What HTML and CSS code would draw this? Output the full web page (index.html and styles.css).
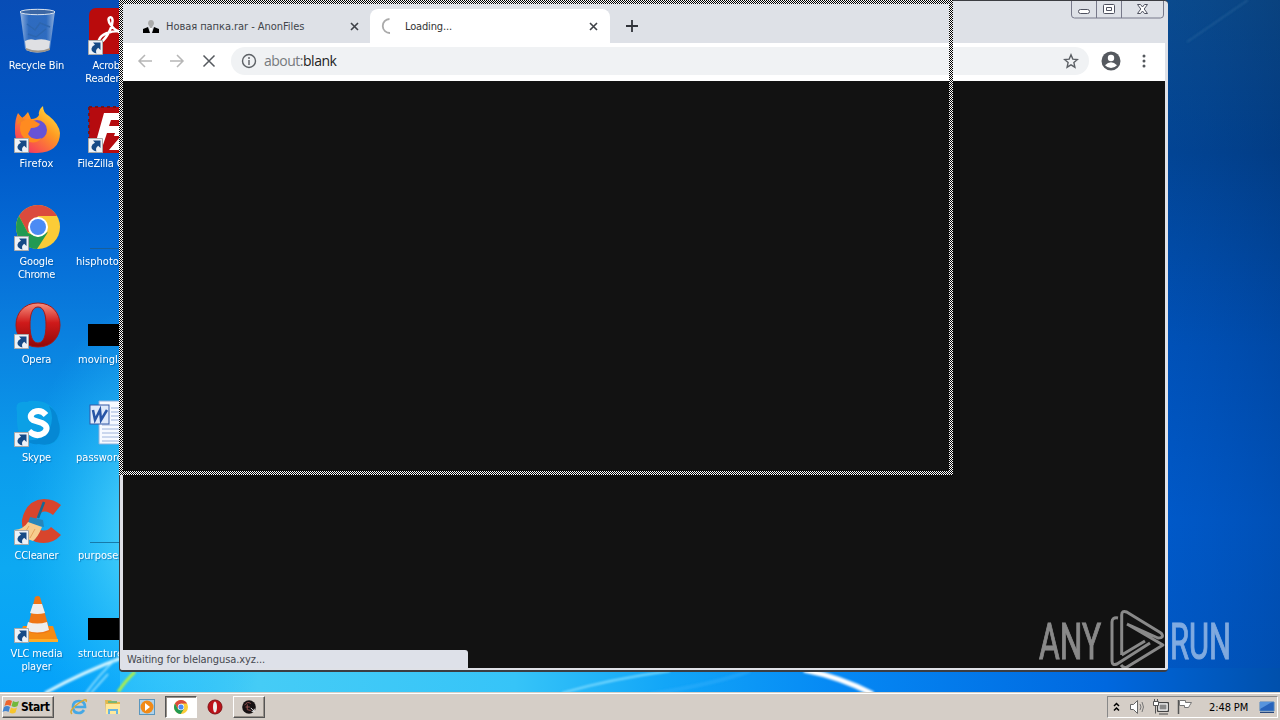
FILE: index.html
```html
<!DOCTYPE html>
<html lang="en">
<head>
<meta charset="utf-8">
<title>Desktop</title>
<link rel="stylesheet" href="styles.css">
</head>
<body>
<main class="desktop">
<svg class="wallpaper" viewBox="0 0 1280 693" preserveAspectRatio="none">
  <defs>
    <linearGradient id="leftSky" x1="0" y1="0" x2="0" y2="1"><stop offset="0" stop-color="#084db6"/><stop offset=".2" stop-color="#0057c6"/><stop offset=".35" stop-color="#056bd6"/><stop offset=".48" stop-color="#0a80df"/><stop offset=".66" stop-color="#0b9cec"/><stop offset=".82" stop-color="#0da9f2"/><stop offset="1" stop-color="#05a2fa"/></linearGradient>
    <linearGradient id="rightSky" x1="0" y1="0" x2="0" y2="1"><stop offset="0" stop-color="#0c467f"/><stop offset=".22" stop-color="#023f87"/><stop offset=".5" stop-color="#004eb0"/><stop offset=".75" stop-color="#0057c4"/><stop offset="1" stop-color="#0055bd"/></linearGradient>
    <linearGradient id="lowSky"><stop offset="0" stop-color="#23b9fa"/><stop offset=".12" stop-color="#45ccf6"/><stop offset=".34" stop-color="#36c4f8"/><stop offset=".47" stop-color="#12a6f8"/><stop offset=".62" stop-color="#0588f4"/><stop offset=".85" stop-color="#0068df"/><stop offset="1" stop-color="#0050ac"/></linearGradient>
    <radialGradient id="glow"><stop offset="0" stop-color="#6ee8ff" stop-opacity=".85"/><stop offset="1" stop-color="#20bfff" stop-opacity="0"/></radialGradient>
    <linearGradient id="rightShade"><stop offset="0" stop-color="#0062e0" stop-opacity=".15"/><stop offset="1" stop-color="#00327c" stop-opacity=".2"/></linearGradient>
    <filter id="soft"><feGaussianBlur stdDeviation="1"/></filter>
  </defs>
  <rect width="640" height="693" fill="url(#leftSky)"/>
  <rect x="640" width="640" height="693" fill="url(#rightSky)"/>
  <rect x="1168" width="112" height="693" fill="url(#rightShade)"/>
  <rect x="120" y="668" width="1160" height="25" fill="url(#lowSky)"/>
  <ellipse cx="155" cy="530" rx="135" ry="230" fill="url(#glow)"/>
  <g filter="url(#soft)" fill="none">
    <path d="M45 693Q83 672 124 657" stroke="#d9f7ff" stroke-width="3"/>
    <path d="M86 693Q99 675 115 660M91 693l17-19" stroke="#a6e9ff" stroke-width="1.5"/>
    <path d="M118 692q8-12 17-20" stroke="#b9f43b" stroke-width="3"/>
    <path d="M562 693Q610 679 670 671" stroke="#79d9ff" stroke-width="2"/>
    <path d="M650 694q65-10 100-23" stroke="#41b8ff" stroke-width="4" opacity=".35"/>
    <path d="M804 670Q840 677 873 694" stroke="#fff" stroke-width="5"/>
    <path d="M1187 42L1248 0" stroke="#3e78aa" stroke-width="1.5" opacity=".5"/>
  </g>
</svg>

<svg class="defs" aria-hidden="true">
  <symbol id="shortcut" viewBox="0 0 15 15"><path fill="#eef2f7" stroke="#aaa" d="M.5.5h14v14H.5z"/><path fill="#164a86" d="M5 2.500h7.500V10l-2.300-2.300Q7 10 8.500 13.500 3 12 3.500 8.500 4 6 7 4.800z"/></symbol>
  <symbol id="chrome" viewBox="0 0 44 44"><circle cx="22" cy="22" r="22" fill="#fbcc37"/><path d="M3 11A22 22 0 0 1 41 11H22L12 28z" fill="#db4b3d"/><path d="M3 11A22 22 0 0 0 21 44L32 27 22 32 12 28z" fill="#229a53"/><circle cx="22" cy="22" r="10" fill="#fff"/><circle cx="22" cy="22" r="8" fill="#4b8bf4"/></symbol>
  <symbol id="opera" viewBox="0 0 46 46"><defs><linearGradient id="og" x2="0" y2="1"><stop stop-color="#f7917f"/><stop offset=".45" stop-color="#cf1a1a"/><stop offset="1" stop-color="#8f0808"/></linearGradient></defs><path fill="url(#og)" stroke="#a51917" fill-rule="evenodd" d="M23 1C37 1 45 11 45 23S37 45 23 45 1 35 1 23 9 1 23 1zM23 5C17 5 15 13 15 23s2 18 8 18 8-8 8-18S29 5 23 5z"/></symbol>
</svg>

<section class="icons">
  <div class="item"><svg class="pic" viewBox="0 0 48 48"><defs><linearGradient id="bin"><stop stop-color="#cddcf0" stop-opacity=".75"/><stop offset=".25" stop-color="#4a7fc4" stop-opacity=".6"/><stop offset=".75" stop-color="#4a7fc4" stop-opacity=".6"/><stop offset="1" stop-color="#c4d5eb" stop-opacity=".75"/></linearGradient></defs><path d="M7 3h35l-5 38q-12 5-25 0z" fill="url(#bin)"/><path d="M12 33q5-3 10-1 8-2 15 1l-1 9q-12 5-23 0z" fill="#dfe0e3"/><path d="M13 40q12 5 24 0v2q-12 5-24 0z" fill="#9b948b"/><path d="M14 16l8 6 5-7 10 4M15 26l8 3 10-8" stroke="#2d66af" stroke-width="1.500" fill="none"/><ellipse cx="24.500" cy="4" rx="17.500" ry="2.700" fill="#3c67a4" stroke="#dce5ef"/></svg><p>Recycle Bin</p></div>
  <div class="item"><svg class="pic" viewBox="0 0 48 48"><rect x="2" width="45" height="46" rx="7" fill="#b90b0c"/><path d="M12 32c2-6 11-9 21-9 9 0 7 5 1 2-9-4-14-12-12-15 4-3 5 4 1 12-4 9-10 15-11 10z" fill="none" stroke="#fff" stroke-width="2.500"/><use href="#shortcut" x="1" y="32" width="15" height="15"/></svg><p>Acrobat<br>Reader DC</p></div>
  <div class="item"><svg class="pic" viewBox="0 0 48 48"><defs><linearGradient id="ff" x1="1" x2=".2" y2="1"><stop stop-color="#fff14a"/><stop offset=".45" stop-color="#ff9a22"/><stop offset="1" stop-color="#f52f65"/></linearGradient></defs><path d="M2 22Q2 13 5 7l4 5q3-2 6-6l3 7q6 0 8-4-1-5 4-9 0 7 6 10 10 8 11 17 0 19-23 20T2 22z" fill="url(#ff)"/><circle cx="24" cy="24" r="10" fill="#6653d6"/><path d="M8 16q7-5 12-2l7 4q-2 4-9 4l-3 6q4 7 14 4-9 9-18 0-6-6-3-16z" fill="#ff8b20"/><path d="M4 19l2-10 6 5q-5 2-8 5z" fill="#f38424"/><use href="#shortcut" x="1" y="32" width="15" height="15"/></svg><p class="loose">Firefox</p></div>
  <div class="item"><svg class="pic" viewBox="0 0 48 48"><rect x="2" y="1" width="48" height="46" fill="#b50b0f"/><path d="M2 1h48M2 1v46" stroke="#75131c" stroke-width="2" stroke-dasharray="3 3"/><path d="M17 7h26l-2 7H24l-2 6h14l-2 7H20l-4 12H8z" fill="#fff"/><path d="M29 24h18L35 38h13v6H22l12-14h-7z" fill="#fff"/><use href="#shortcut" x="1" y="32" width="15" height="15"/></svg><p>FileZilla Client</p></div>
  <div class="item"><svg class="pic" viewBox="0 0 48 48"><use href="#chrome" x="3" y="1" width="44" height="44"/><use href="#shortcut" x="1" y="32" width="15" height="15"/></svg><p>Google<br><span class="wide">Chrome</span></p></div>
  <div class="item"><svg class="pic" viewBox="0 0 48 48"><path d="M3 44.500h46" stroke="#185f9b"/></svg><p class="file">hisphotoes.jpg</p></div>
  <div class="item"><svg class="pic" viewBox="0 0 48 48"><use href="#opera" x="2" width="46" height="46"/><use href="#shortcut" x="1" y="32" width="15" height="15"/></svg><p>Opera</p></div>
  <div class="item"><svg class="pic" viewBox="0 0 48 48"><path d="M1 22h48v22H1z"/></svg><p class="file shift">movinglands</p></div>
  <div class="item"><svg class="pic" viewBox="0 0 48 48"><path d="M4 12Q1 0 14 2q3-2 10-1 17 1 21 19 5 11-1 20-7 7-15 4Q5 46 4 22z" fill="#0ba0e6"/><path d="M36 6q8 5 9 14 5 14-4 22-6 4-15 2-8 1-14-4 17 2 24-10 6-12 0-24z" fill="#0588d4"/><path d="M33 15q-5-6-12-3-6 4-1 8l9 3q8 4 2 10-8 5-15-2" fill="none" stroke="#fff" stroke-width="6"/><use href="#shortcut" x="1" y="32" width="15" height="15"/></svg><p>Skype</p></div>
  <div class="item"><svg class="pic" viewBox="0 0 48 48"><path d="M12 1h36v43H12z" fill="#f6f9ff" stroke="#8ab0dd"/><path d="M24 8h20M24 12h20M24 16h20M24 20h20M15 25h29M15 29h29M15 33h29M15 37h29M15 41h29" stroke="#9eb4dc"/><rect x="3" y="5" width="19" height="19" fill="#dfe9fa" stroke="#3259a6"/><path d="M6 10l2 10 5-10 1 10 6-10" fill="none" stroke="#2754a6" stroke-width="2.500"/></svg><p class="file">passwordsx.rtf</p></div>
  <div class="item"><svg class="pic" viewBox="0 0 48 48"><path d="M48 7L40 17q-10-8-16 2-3 9 4 13 6 2 10-3l10 8q-10 11-25 7Q8 38 9 22 13 2 31 1q10 0 17 6z" fill="#d8452c"/><path d="M31 4L25 20" stroke="#176892" stroke-width="2.500"/><path d="M17 19l13 3 1 7-16-4z" fill="#2686bb"/><path d="M15 24l14 5q-4 10-9 14Q9 40 1 32q10-1 14-8z" fill="#f7cc8d"/><path d="M16 28l-5 8m11-5l-5 9" stroke="#e7a25b"/><use href="#shortcut" x="1" y="32" width="15" height="15"/></svg><p>CCleaner</p></div>
  <div class="item"><svg class="pic" viewBox="0 0 48 48"><path d="M3 44.500h46" stroke="#177aa9"/></svg><p class="file shift">purposesite</p></div>
  <div class="item"><svg class="pic" viewBox="0 0 48 48"><path d="M10 30h30l5 15H4z" fill="#f58b15"/><path d="M4 43h41v3H4z" fill="#ffac28"/><path d="M22 1q3-2 5 0l10 34q-12 6-23 0z" fill="#ef7615"/><path d="M20 8h9l3 9q-8 2-15 0zM15 26q9 3 19 0l2 8q-12 5-23 0z" fill="#eee"/><use href="#shortcut" x="1" y="32" width="15" height="15"/></svg><p>VLC media<br>player</p></div>
  <div class="item"><svg class="pic" viewBox="0 0 48 48"><path d="M1 22h48v22H1z"/></svg><p class="file shift">structurede</p></div>
</section>

<section class="window">
  <header class="tabs">
    <div class="tab first">
      <svg class="fav" viewBox="0 0 16 14"><path d="M0 13V9l5-2 2 6zM9 13l2-6 5 2v4z"/><path d="M5 4q0-4 3-4t3 4l-3 5z" fill="#aaa"/><path d="M7 8l1 5 1-5z" fill="#fff"/></svg>
      <span class="title">Новая папка.rar - AnonFiles</span>
      <svg class="close" viewBox="0 0 9 9"><path d="M1 1l7 7m0-7L1 8"/></svg>
    </div>
    <div class="tab active">
      <svg class="spin" viewBox="0 0 16 16"><path d="M9.500 1A7 7 0 1 0 10 15"/></svg>
      <span class="title load">Loading...</span>
      <svg class="close" viewBox="0 0 9 9"><path d="M1 1l7 7m0-7L1 8"/></svg>
    </div>
    <svg class="plus" viewBox="0 0 12 12"><path d="M6 0v12M0 6h12"/></svg>
    <svg class="controls" viewBox="0 0 93 18"><path d="M.5 0v14q0 3 3 3h86q3 0 3-3V0M25.500 0v17M50.500 0v17" fill="none" stroke="#77798a"/><rect x="7.500" y="8.500" width="11" height="4" rx="2" fill="#fff" stroke="#4f5260"/><rect x="32.500" y="3.500" width="11" height="9" rx="1" fill="#fff" stroke="#4f5260"/><path fill="#fff" stroke="#4f5260" d="M35.500 6.500h5v3h-5zM66.500 3.500h3l2 2.500 2-2.500h3L73.200 8l3.300 4.500h-3l-2-2.500-2 2.500h-3L69.800 8z"/></svg>
  </header>
  <div class="toolbar">
    <svg class="nav pale" viewBox="0 0 16 16"><path d="M15 8H2m6-6L2 8l6 6"/></svg>
    <svg class="nav pale" viewBox="0 0 16 16"><path d="M1 8h13M8 2l6 6-6 6"/></svg>
    <svg class="nav" viewBox="0 0 16 16"><path d="M2.500 2.500l11 11m0-11l-11 11"/></svg>
    <div class="address">
      <svg class="info" viewBox="0 0 16 16"><circle cx="8" cy="8" r="6.500"/><path d="M8 7v5M8 4v2"/></svg>
      <span class="url"><i>about:</i>blank</span>
      <svg class="star" viewBox="0 0 16 16"><path d="M8 1.800l1.800 4.300 4.600.4-3.500 3.100 1 4.600L8 11.800l-3.900 2.400 1-4.600-3.500-3.100 4.600-.4z"/></svg>
    </div>
    <svg class="user" viewBox="0 0 20 20"><circle cx="10" cy="10" r="9.500" fill="#55595f"/><circle cx="10" cy="7" r="3.200" fill="#fff"/><path d="M4 14.200q3-3 6-3t6 3Q13.500 17 10 17t-6-2.800z" fill="#fff"/></svg>
    <svg class="more" viewBox="0 0 4 14"><circle cx="2" cy="2" r="1.500"/><circle cx="2" cy="7" r="1.500"/><circle cx="2" cy="12" r="1.500"/></svg>
  </div>
  <div class="page"><div class="status"><span>Waiting for blelangusa.xyz...</span></div></div>
</section>

<svg class="drag" viewBox="0 0 834 475"><defs><pattern id="check" width="2" height="2" patternUnits="userSpaceOnUse"><path fill="#000" d="M0 0h2v2H0z"/><path fill="#fff" d="M0 0h1v1H0zM1 1h1v1H1z"/></pattern></defs><path fill="url(#check)" fill-rule="evenodd" shape-rendering="crispEdges" d="M0 0h834v475H0zM4 4v467h826V4z"/></svg>

<svg class="brand" viewBox="0 0 200 64">
  <g class="brandtext"><text x="3" y="50" textLength="62" lengthAdjust="spacingAndGlyphs">ANY</text><text x="134" y="50" textLength="61" lengthAdjust="spacingAndGlyphs">RUN</text></g>
  <path d="M82 9q-6-1-6 4v39q0 5 5 3L114 34M85.700 46V6q0-5 5-3L125 24q4 5-3 5L91 15M91 15L127 36 91 58q-3 2-6-2M85.700 46L109 32" fill="none" stroke="#fff" stroke-width="3" stroke-linejoin="round"/>
</svg>
</main>

<footer class="taskbar">
  <button class="start"><svg viewBox="0 0 16 16"><path d="M2 2q3-2 6 0L6.500 7q-3-2-6 0z" fill="#ed642e"/><path d="M9 2q3 2 6 0l-1.500 5q-3 2-6 0z" fill="#72b83b"/><path d="M0 8q3-2 6 0l-1.500 5q-3-2-6 0z" fill="#4284d0"/><path d="M7 8.500q3 2 6 0l-1.500 5q-3 2-6 0z" fill="#f7c52c"/></svg><span>Start</span></button>
  <svg class="quick" viewBox="0 0 18 18"><path d="M14 12q-2 3-5 3-6 0-6-6t6-6q6 0 6 6H5" fill="none" stroke="#45a8e5" stroke-width="2.700"/><path d="M2 16Q-2 13 9 5q9-6 7-1" fill="none" stroke="#d9a933" stroke-width="1.500"/></svg>
  <svg class="quick" viewBox="0 0 18 18"><path d="M1 2h6l2 2h7v11H2z" fill="#e1b94d"/><path d="M2 6h14v10H2z" fill="#ffe99b"/><path d="M4 16v-5h10v5h-2v-3H6v3z" fill="#69b5df"/><path d="M4 4h9" stroke="#79b675" stroke-width="2"/></svg>
  <svg class="quick" viewBox="0 0 18 18"><rect x="1.500" y="1.500" width="15" height="15" fill="#afd2ec" stroke="#5a96bd"/><circle cx="9" cy="9" r="6.500" fill="#f18a17"/><path d="M7 5l5 4-5 4z" fill="#fff"/></svg>
  <div class="task pressed"><svg viewBox="0 0 44 44"><use href="#chrome"/></svg></div>
  <svg class="quick operaicon" viewBox="0 0 18 18"><circle cx="9" cy="9" r="7" fill="#bd1119" stroke="#7f1115"/><ellipse cx="9" cy="9" rx="2" ry="5.500" fill="#eee"/></svg>
  <div class="task"><svg viewBox="0 0 16 16"><circle cx="8" cy="8" r="7.800" fill="#161113"/><path d="M3 6q3-5 7-2M4 8h5M6 5v6l4 1" stroke="#a65b59" fill="none"/><path d="M10 9l4 4m0-3v3h-3" stroke="#fff" fill="none"/></svg></div>
  <div class="tray">
    <svg class="chev" viewBox="0 0 7 10"><path d="M1 4l2.500-2.500L6 4M1 8.500L3.500 6 6 8.500"/></svg>
    <svg class="tr" viewBox="0 0 18 16"><path d="M1.500 5.500h3l4-4v13l-4-4h-3z" fill="#fff" stroke="#666"/><path d="M11 5q2 3 0 6M13 3q3 5 0 10" fill="none" stroke="#777"/></svg>
    <svg class="tr" viewBox="0 0 18 16"><path d="M4.500 3.500h11v9h-11zM6 15h9" fill="#aaa" stroke="#444"/><path d="M6 5h8v6H6z" fill="#888" stroke="#fff"/><path d="M.5 2.500h5v4h-5zM2.500 6.500v8M1.500 0v2M4.500 0v2" fill="#fff" stroke="#555"/></svg>
    <svg class="tr" viewBox="0 0 18 16"><path d="M1.500 1v14" stroke="#555" stroke-width="1.500"/><path d="M2.500 1.500h6v2h6q-2 3-3 5h-4v-2h-5z" fill="#fff" stroke="#777"/></svg>
    <time>2:48 PM</time>
    <svg class="show" viewBox="0 0 16 13"><path d="M1 1h14v9H1z" fill="#2763bc" stroke="#4c82bd"/><path d="M1 1h12L1 8z" fill="#5794dd"/><path d="M1 11h14v1H1z" fill="#26467c"/></svg>
  </div>
</footer>
</body>
</html>
```
FILE: styles.css
```css
* { box-sizing: border-box; }
body { margin: 0; width: 1280px; height: 720px; overflow: hidden; display: flex; flex-direction: column; font: 11px/13px "DejaVu Sans Condensed", "DejaVu Sans", sans-serif; font-stretch: condensed; }
.desktop { position: relative; height: 692px; overflow: hidden; flex: none; }
.wallpaper { position: absolute; width: 1280px; height: 693px; }
.defs { position: absolute; width: 0; height: 0; }
svg { display: block; flex: none; }
.icons { position: relative; width: 119px; overflow: hidden; padding-top: 8px; display: grid; grid-template-columns: 73px 76px; grid-auto-rows: 98px; }
.item { display: flex; flex-direction: column; align-items: center; color: #fff; text-align: center; text-shadow: 1px 1px 1px #004b8b80; }
.item p { margin: 3px 0 0; white-space: nowrap; letter-spacing: -.15px; }
.item p.loose { letter-spacing: .2px; }
.item .wide { letter-spacing: -.3px; }
.item p.file { align-self: flex-start; margin-left: 3px; letter-spacing: .02px; }
.item p.shift { margin-left: 5px; }
.pic { width: 48px; height: 48px; }
.window { position: absolute; left: 119px; top: 0; width: 1049px; height: 672px; border: solid #3c3d42; border-width: 1px 0 2px 1px; border-radius: 4px; padding: 0 3px 2px 3px; background: #dfe1e7; display: flex; flex-direction: column; }
.tabs { height: 42px; display: flex; padding-top: 8px; background: #dee1e7; position: relative; flex: none; }
.tab { height: 34px; display: flex; align-items: center; color: #42454b; }
.first { width: 247px; padding: 0 11px 0 20px; }
.active { width: 240px; background: #fff; border-radius: 8px 8px 0 0; padding: 0 12px 0 10px; color: #333; }
.fav { width: 16px; height: 14px; margin: 2px 7px 0 0; }
.title { flex: 1; white-space: nowrap; letter-spacing: -.05px; }
.load { letter-spacing: -.15px; }
.close { width: 9px; height: 9px; fill: none; stroke: #3e4147; stroke-width: 1.6; }
.spin { width: 16px; height: 16px; margin-right: 9px; fill: none; stroke: #aaa; stroke-width: 1.8; }
.plus { width: 12px; height: 12px; margin: 11px 0 0 16px; stroke: #303339; stroke-width: 1.8; }
.controls { width: 93px; height: 18px; position: absolute; right: 1px; top: 0; }
.toolbar { height: 38px; background: #fff; display: flex; align-items: center; padding: 0 0 2px 14px; flex: none; }
.nav { width: 16px; height: 16px; margin-right: 16px; fill: none; stroke: #55595e; stroke-width: 1.5; }
.nav.pale { stroke: #b6b6b6; }
.address { height: 28px; width: 858px; border-radius: 14px; background: #f0f2f4; margin-left: -2px; padding: 0 10px; display: flex; align-items: center; }
.info, .star { width: 16px; height: 16px; fill: none; stroke: #5c6065; stroke-width: 1.4; }
.url { margin-left: 7px; flex: 1; font: 14px/18px "Open Sans", sans-serif; letter-spacing: -.5px; color: #222; }
.url i { font-style: normal; color: #777a7e; }
.user { width: 20px; height: 20px; margin-left: 12px; }
.more { width: 4px; height: 14px; margin-left: 21px; fill: #54585d; }
.page { flex: 1; background: #121212; display: flex; align-items: flex-end; }
.status { width: 345px; height: 18px; border-radius: 0 3px 0 0; background: #dee1e9; color: #45484e; padding: 3px 0 0 4px; }
.status span { letter-spacing: -.08px; }
.drag { position: absolute; left: 119px; top: 0; width: 834px; height: 475px; }
.brand { position: absolute; left: 1036px; top: 609px; width: 200px; height: 64px; opacity: .5; }
.brandtext { fill: #fff; stroke: #fff; stroke-width: 1.1px; font: 50px "Liberation Sans Narrow", "Roboto", sans-serif; }
.taskbar { height: 28px; border-top: 1px solid #d4d0c8; background: #d5cec7; box-shadow: inset 0 1px #fff; display: flex; align-items: center; padding: 1px 2px 0; }
.start { width: 52px; height: 22px; padding: 0 1px; border: 1px solid; border-color: #fff #555 #555 #fff; box-shadow: inset -1px -1px #969089; background: #d5cec7; display: flex; align-items: center; font: bold 12px/16px "DejaVu Sans Condensed", "DejaVu Sans", sans-serif; font-stretch: condensed; color: #000; }
.start svg { width: 16px; height: 16px; overflow: visible; margin-right: 1px; }
.start span { letter-spacing: -.45px; }
.quick { width: 18px; height: 18px; margin-left: 16px; }
.task { width: 32px; height: 22px; display: flex; align-items: center; justify-content: center; border: 1px solid; border-color: #fff #555 #555 #fff; box-shadow: inset -1px -1px #969089; }
.task svg { width: 14px; height: 14px; }
.pressed { background: #fff; border-color: #555 #fff #fff #555; margin-left: 9px; box-shadow: inset 1px 1px #969089; }
.operaicon { margin-left: 9px; }
.operaicon + .task { margin-left: 9px; }
.tray { width: 171px; height: 22px; margin-left: auto; border: 1px solid; border-color: #888 #fff #fff #888; display: flex; align-items: center; padding-left: 5px; }
.chev { width: 7px; height: 10px; fill: none; stroke: #000; stroke-width: 1.5; }
.tr { width: 18px; height: 16px; margin-left: 6px; }
.chev + .tr { margin-left: 9px; }
.tray time { margin-left: 14px; width: 42px; white-space: nowrap; letter-spacing: -.1px; }
.show { width: 16px; height: 13px; margin-left: 8px; }
```
